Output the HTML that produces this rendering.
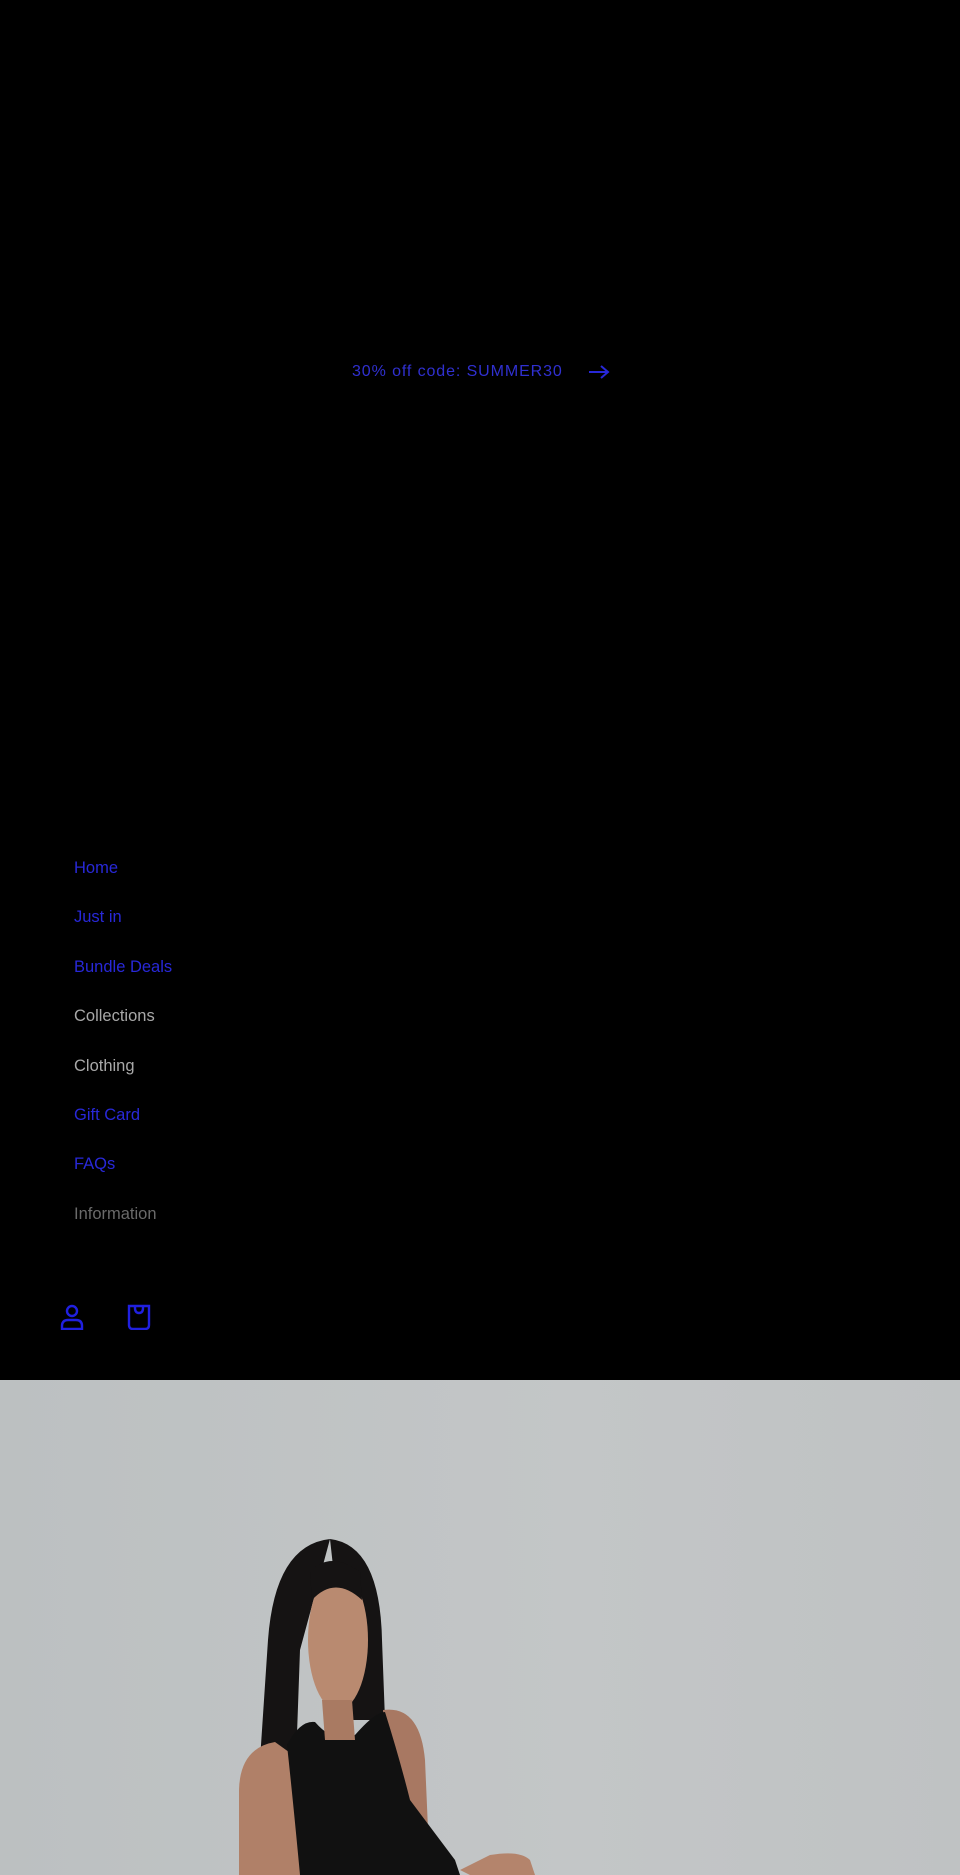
<!DOCTYPE html>
<html><head><meta charset="utf-8"><style>
body{margin:0;width:960px;height:1875px;background:#000;overflow:hidden;font-family:"Liberation Sans",sans-serif;position:relative}
.ann{position:absolute;top:363px;left:352px;color:#3030d0;font-size:16px;letter-spacing:0.9px;white-space:nowrap}
.nav{position:absolute;left:74px;top:844px;font-size:16.5px;line-height:49.4px}
.nav div{height:49.4px}
.b{color:#2828d8}.g{color:#a8a8a8}.d{color:#6a6a6a}
.hero{position:absolute;left:0;top:1380px;width:960px;height:495px;background:linear-gradient(90deg,#bcc0c1,#c3c6c7 60%,#bfc2c3);overflow:hidden}
</style></head><body>
<div class="ann">30% off code: SUMMER30</div>
<svg style="position:absolute;left:588px;top:364px" width="22" height="16" viewBox="0 0 22 16"><path d="M1 8H20M13 2L20 8L13 14" fill="none" stroke="#2828d8" stroke-width="2"/></svg>
<div class="nav">
<div class="b">Home</div><div class="b">Just in</div><div class="b">Bundle Deals</div><div class="g">Collections</div><div class="g">Clothing</div><div class="b">Gift Card</div><div class="b">FAQs</div><div class="d">Information</div>
</div>
<svg style="position:absolute;left:60px;top:1304px" width="24" height="26" viewBox="0 0 24 26" fill="none" stroke="#2020e0" stroke-width="2.4"><circle cx="12" cy="7" r="5"/><path d="M2 25V22Q2 16 8 16H16Q22 16 22 22V25Z"/></svg>
<svg style="position:absolute;left:127px;top:1304px" width="24" height="26" viewBox="0 0 24 26" fill="none" stroke="#2020e0" stroke-width="2.4"><path d="M2 2H22V21Q22 25 18 25H6Q2 25 2 21Z"/><path d="M8 2V4Q8 9 12 9Q16 9 16 4V2"/></svg>
<div class="hero">
<svg width="960" height="495" viewBox="0 1380 960 495">
<path d="M330 1539Q275 1545 268 1640L258 1790L295 1790L300 1650Z" fill="#151313"/>
<path d="M330 1539Q380 1545 382 1640L385 1720L350 1720Z" fill="#151313"/>
<path d="M239 1790Q240 1748 275 1742L300 1760L300 1875L239 1875Z" fill="#b08068"/>
<path d="M383 1710Q420 1705 425 1760L430 1875L395 1875Z" fill="#a87862"/>
<path d="M287 1745Q300 1720 315 1722Q335 1745 355 1735Q375 1712 385 1712Q400 1760 410 1800L455 1860L460 1875L300 1875Q293 1800 287 1745Z" fill="#111"/>
<path d="M530 1860Q520 1850 490 1855L460 1870L470 1875L535 1875Z" fill="#b4846c"/>
<ellipse cx="338" cy="1640" rx="30" ry="70" fill="#b98a70"/>
<path d="M310 1572Q330 1550 360 1572L362 1600Q335 1575 312 1600Z" fill="#151313"/>
<path d="M322 1700L352 1700L355 1740L325 1740Z" fill="#a97a62"/>
</svg>
</div>
</body></html>
